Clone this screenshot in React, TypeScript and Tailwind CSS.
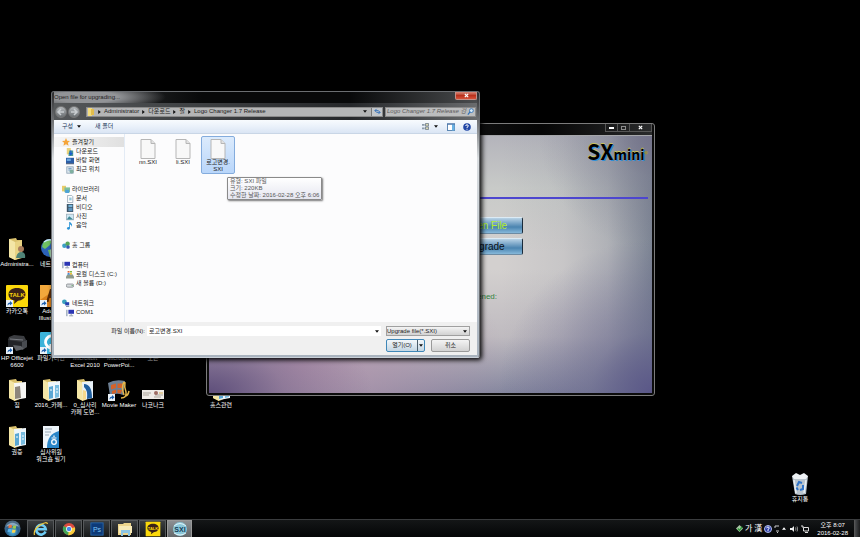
import React from "react";

const FolderIcon = ({ kind }: { kind: string }) => (
  <svg viewBox="0 0 24 24" className="h-6 w-6">
    <path d="M4 2 L11 1 L12 3 L17 3 L17 20 L10 23 L4 20 Z" fill="#d9c06c" />
    <path d="M4 2 L10 5 L10 23 L4 20 Z" fill="#f4e6a6" />
    {kind === "user" && (
      <g>
        <path d="M10 5 L17 3 L17 21 L10 23 Z" fill="#e9d383" />
        <circle cx="16" cy="12" r="3" fill="#a97d5c" />
        <path d="M11 21 Q12 15 16 15 Q21 15 20 21 Z" fill="#4f8377" />
      </g>
    )}
    {kind === "photo" && (
      <g>
        <path d="M9 5 L21 4 L21 20 L10 22 Z" fill="#f6f6f4" />
        <path d="M10 9 L15 8 L16 20 L10 21 Z" fill="#8d867c" />
      </g>
    )}
    {kind === "docs" && (
      <g>
        <path d="M9 4 L21 3 L21 20 L10 22 Z" fill="#eef6fb" />
        <path d="M10 9 L14 8 L14 20 L10 21 Z" fill="#5aa7d4" />
        <path d="M16 7 L20 7 L20 19 L16 20 Z" fill="#79bde0" />
        <path d="M11 12 h2 M17 11 h2 M17 14 h2" stroke="#fff" />
      </g>
    )}
    {kind === "blue" && (
      <g>
        <path d="M9 4 L20 3 L20 20 L10 22 Z" fill="#e8f1f8" />
        <path d="M11 6 Q19 6 19 20 L14 21 Q15 12 11 9 Z" fill="#1f5f9f" />
        <path d="M10 12 L13 13 L13 21 L10 22 Z" fill="#f5d98c" />
      </g>
    )}
  </svg>
);

const Shortcut = () => (
  <g>
    <rect x="1" y="16" width="7" height="7" fill="#e9f1f8" />
    <path d="M2.500 21.500 Q2.500 18.500 5 18.500 V17 L7.500 19.200 L5 21.500 V20 Q3.500 20 2.500 21.500Z" fill="#1c5fae" />
  </g>
);

const GlobeIcon = () => (
  <svg viewBox="0 0 24 24" className="h-6 w-6">
    <circle cx="11" cy="11" r="9" fill="#2b62b8" />
    <path d="M4 6 Q8 1 13 3 L11 8 L6 12 L3 10Z M9 13 L15 12 L16 17 L11 20Z" fill="#6fc060" />
    <path d="M5 5 Q10 1 15 4" stroke="#c6e6fb" strokeWidth="1.500" fill="none" />
    <rect x="12" y="13" width="10" height="8" fill="#3a4ec6" stroke="#dce6f6" />
  </svg>
);

const TalkIcon = ({ shortcut }: { shortcut?: boolean }) => (
  <svg viewBox="0 0 24 24" className="h-full w-full">
    <rect x="1" y="1" width="22" height="22" rx="1" fill="#fbd80a" />
    <path d="M12 4 C17 4 20.500 6.500 20.500 10.500 C20.500 14 17 16.500 13 16.700 L9 20 L9.500 16.500 C6 16 3.500 13.500 3.500 10.500 C3.500 6.500 7 4 12 4Z" fill="#3a2218" />
    <text x="12" y="13" textAnchor="middle" fontSize="6" fontWeight="700" fontFamily="Liberation Sans, sans-serif" fill="#fbd80a">TALK</text>
    {shortcut && <Shortcut />}
  </svg>
);

const IllustratorIcon = () => (
  <svg viewBox="0 0 24 24" className="h-6 w-6">
    <rect x="1" y="1" width="22" height="22" fill="#d9811c" />
    <path d="M1 1 H23 L1 16Z" fill="#f2a83c" />
    <path d="M7 18 L11 5 H13 L17 18 H14.500 L13.500 14 H10.500 L9.500 18Z" fill="#5a2c06" />
    <Shortcut />
  </svg>
);

const PrinterIcon = () => (
  <svg viewBox="0 0 24 24" className="h-6 w-6">
    <path d="M4 6 L9 4 L19 5 L21 9 L20 12 L6 12 L3 9Z" fill="#3b3d41" />
    <path d="M3 9 L17 11 L22 9 L22 16 L17 19 L3 16Z" fill="#222428" />
    <path d="M17 11 L22 9 L22 16 L17 19Z" fill="#484b50" />
    <path d="M8 14 L16 15 L19 18 L11 20Z" fill="#5d6065" />
    <path d="M5 8 L18 9" stroke="#777a80" />
    <Shortcut />
  </svg>
);

const FileShareIcon = () => (
  <svg viewBox="0 0 24 24" className="h-6 w-6">
    <rect x="1" y="1" width="22" height="22" rx="1" fill="#3bb3da" />
    <path d="M16 6 A6 6 0 1 0 17 15 M12 13 V21" stroke="#fff" strokeWidth="3" fill="none" />
    <Shortcut />
  </svg>
);

const MovieIcon = () => (
  <svg viewBox="0 0 24 24" className="h-6 w-6">
    <path d="M1 5 Q8 1 18 3 L16 17 Q9 14 3 18Z" fill="#6d7f93" />
    <path d="M4 7 L9 5.500 L9 10 L4 11.500Z M10.500 5.500 L16 5.500 L15 10 L10.500 10Z M5 13 L9 11.500 V15 L5 16Z M10.500 11.500 L15 12 L14 15.500 L10.500 15Z" fill="#d4622a" />
    <path d="M14 20 Q20 20 19 14 Q17 9 18 4 M18 18 Q21 18 22 13 M17 4 Q14 9 17 17" stroke="#e5b64a" strokeWidth="1.500" fill="none" />
    <Shortcut />
  </svg>
);

const PictureIcon = () => (
  <svg viewBox="0 0 24 24" className="h-6 w-6">
    <rect x="1" y="12" width="22" height="9" fill="#eeeae6" />
    <path d="M2 15 H10 M2 17 H8 M14 17 H22 M13 19 H20" stroke="#aaa39a" />
    <circle cx="15" cy="15" r="2" fill="#9d6b62" />
    <path d="M18 15 h4" stroke="#d0a94e" />
  </svg>
);

const HwpIcon = () => (
  <svg viewBox="0 0 24 24" className="h-6 w-6">
    <path d="M4 1 H20 V23 H4Z" fill="#eef5fa" />
    <path d="M6 4 H13 M6 7 H12 M6 10 H10" stroke="#9aa9b6" />
    <path d="M20 6 V23 H8 Q8 9 20 6Z" fill="#2a86c8" />
    <circle cx="15" cy="17" r="2.300" fill="none" stroke="#fff" strokeWidth="1.300" />
    <path d="M12.500 13 H17.500 M15 10.500 V12" stroke="#fff" strokeWidth="1.200" />
  </svg>
);

const BinIcon = () => (
  <svg viewBox="0 0 24 24" className="h-6 w-6">
    <path d="M4 4 L20 4 L18 22 Q12 24 7 22Z" fill="#b9c4cd" />
    <path d="M4 4 L8 1 L12 3 L16 1 L20 4 L18 7 L6 7Z" fill="#eef2f5" />
    <path d="M6 8 L8 21 M18 8 L16 21" stroke="#eaeff3" strokeWidth="1.500" />
    <path d="M9 14 L11 10 L14 11 M15 13 L15 17 L12 18 M10 18 L8.500 15.500" stroke="#2f74c9" strokeWidth="2" fill="none" />
  </svg>
);

const IeIcon = () => (
  <svg viewBox="0 0 16 16" className="h-4 w-4">
    <path d="M12.500 10.500 A4.800 4.800 0 1 1 12.800 8.300 H4" stroke="#6fcdf6" strokeWidth="2.600" fill="none" />
    <path d="M1.500 14 Q0 9 7 4 Q14 0 14.500 3" stroke="#f2c83c" strokeWidth="1.200" fill="none" />
  </svg>
);

const ChromeIcon = () => (
  <svg viewBox="0 0 16 16" className="h-[14px] w-[14px]">
    <circle cx="8" cy="8" r="7" fill="#dd4b3e" />
    <path d="M8 8 L1.900 4.500 A7 7 0 0 0 8 15Z" fill="#3fa757" />
    <path d="M8 8 L14.700 6 A7 7 0 0 1 7 15Z" fill="#f8cd3b" />
    <circle cx="8" cy="8" r="3.300" fill="#fff" />
    <circle cx="8" cy="8" r="2.500" fill="#4587e8" />
  </svg>
);

const PsIcon = () => (
  <svg viewBox="0 0 16 16" className="h-[14px] w-[14px]">
    <rect x="1" y="1" width="14" height="14" fill="#0d3a78" stroke="#2869b0" />
    <text x="8" y="11" textAnchor="middle" fontSize="8" fontFamily="Liberation Sans, sans-serif" fill="#7cc4f4">Ps</text>
  </svg>
);

const ExplorerIcon = () => (
  <svg viewBox="0 0 16 16" className="h-4 w-4">
    <path d="M1 3 H6 L7 2 H14 V14 H1Z" fill="#ecd48c" />
    <path d="M2 5 H15 V12 H2Z" fill="#f7eab8" />
    <path d="M4 15 V9 H13 V15 H11 V12 H6 V15Z" fill="#8cc5e4" />
  </svg>
);

const SxiIcon = () => (
  <svg viewBox="0 0 16 16" className="h-4 w-4">
    <circle cx="8" cy="8" r="7" fill="#8cc8da" />
    <path d="M2 5 Q8 0 14 5 M2 12 Q8 16 14 12" stroke="#e0f3f8" fill="none" />
    <text x="8" y="10.500" textAnchor="middle" fontSize="7" fontWeight="700" fontFamily="Liberation Sans, sans-serif" fill="#173f58">SXI</text>
  </svg>
);

const StartOrb = () => (
  <svg viewBox="0 0 18 18" className="h-[17px] w-[17px]">
    <defs>
      <radialGradient id="orb" cx="0.500" cy="0.700" r="0.600">
        <stop offset="0" stopColor="#5cc6ee" />
        <stop offset="0.600" stopColor="#27618f" />
        <stop offset="1" stopColor="#4f6d86" />
      </radialGradient>
    </defs>
    <circle cx="9" cy="9" r="8.500" fill="url(#orb)" />
    <path d="M2 7 Q9 -1 16 7 Q9 5 2 7Z" fill="#a9c4d8" opacity="0.700" />
    <path d="M5 5.500 Q7 4.500 8.500 5.500 L8 8.500 Q6 8 4.500 8.700Z" fill="#ee7340" />
    <path d="M9.500 5.700 Q11 6.500 13 5.500 L12.500 9 Q11 9.600 9 8.800Z" fill="#9bcc4a" />
    <path d="M4.300 9.700 Q6 9 8 9.700 L7.400 13 Q6 12 3.800 12.800Z" fill="#5ab4ec" />
    <path d="M8.900 10 Q11 10.800 12.400 10 L11.800 13.200 Q10 14 8.300 13.200Z" fill="#fbd34b" />
  </svg>
);

const desktopItems = [
  { label: ["Administra..."], place: "col-start-1 row-start-1", icon: <FolderIcon kind="user" /> },
  { label: ["네트워크"], place: "col-start-2 row-start-1", icon: <GlobeIcon /> },
  { label: ["카카오톡"], place: "col-start-1 row-start-2", icon: <TalkIcon shortcut /> },
  { label: ["Adobe", "Illustrat..."], place: "col-start-2 row-start-2", icon: <IllustratorIcon /> },
  { label: ["HP Officejet", "6600"], place: "col-start-1 row-start-3", icon: <PrinterIcon /> },
  { label: ["파일가디언"], place: "col-start-2 row-start-3", icon: <FileShareIcon /> },
  { label: ["Microsoft", "Excel 2010"], place: "col-start-3 row-start-3", icon: null },
  { label: ["Microsoft", "PowerPoi..."], place: "col-start-4 row-start-3", icon: null },
  { label: ["오픈"], place: "col-start-5 row-start-3", icon: null },
  { label: ["집"], place: "col-start-1 row-start-4", icon: <FolderIcon kind="photo" /> },
  { label: ["2016_카페..."], place: "col-start-2 row-start-4", icon: <FolderIcon kind="docs" /> },
  { label: ["0_심사리", "카페 도면..."], place: "col-start-3 row-start-4", icon: <FolderIcon kind="blue" /> },
  { label: ["Movie Maker"], place: "col-start-4 row-start-4", icon: <MovieIcon /> },
  { label: ["나코나크"], place: "col-start-5 row-start-4", icon: <PictureIcon /> },
  { label: ["홈스관련"], place: "col-start-7 row-start-4", icon: <FolderIcon kind="docs" /> },
  { label: ["권증"], place: "col-start-1 row-start-5", icon: <FolderIcon kind="docs" /> },
  { label: ["심사위원", "워크숍 필기"], place: "col-start-2 row-start-5", icon: <HwpIcon /> },
];

const DesktopItem = ({ label, icon }: { label: string[]; icon: React.ReactNode }) => (
  <div className="flex flex-col items-center text-[6px] leading-[7px] text-white whitespace-nowrap">
    <div className="h-6 w-6">{icon}</div>
    {label.map((line) => (
      <p key={line}>{line}</p>
    ))}
  </div>
);

const SmallIcon = ({ name }: { name: string }) => (
  <svg viewBox="0 0 10 10" className="h-2 w-2 shrink-0">
    {name === "star" && <path d="M5 0 L6.500 3.300 L10 3.700 L7.400 6 L8.200 9.700 L5 7.800 L1.800 9.700 L2.600 6 L0 3.700 L3.500 3.300Z" fill="#f5a53a" />}
    {name === "download" && (
      <g>
        <path d="M1 0 H6 V8 H1Z" fill="#e9d27c" />
        <path d="M4 3 H9 V10 H3Z" fill="#4f9a8e" />
        <path d="M6 3 V8 M4 6 L6 8.500 L8 6" stroke="#1a5fd0" strokeWidth="1.500" fill="none" />
      </g>
    )}
    {name === "desktop" && (
      <g>
        <rect x="0" y="1" width="10" height="7" fill="#2c5ea6" />
        <rect x="1" y="2" width="5" height="3" fill="#6aa6de" />
        <rect x="0" y="8" width="10" height="1" fill="#1d3354" />
      </g>
    )}
    {name === "recent" && (
      <g>
        <rect x="1" y="1" width="8" height="8" fill="#dce6ee" stroke="#8ea2b4" />
        <path d="M3 3 H7 M3 5 H6" stroke="#5485b6" />
        <circle cx="7" cy="7" r="2.500" fill="#7fb0a0" />
      </g>
    )}
    {name === "library" && (
      <g>
        <path d="M0 1 H5 V8 H0Z" fill="#e8cc6a" />
        <path d="M3 3 H10 V9 H3Z" fill="#7fbf9b" />
        <path d="M4 6 H9 V10 H4Z" fill="#4da2d6" />
      </g>
    )}
    {name === "document" && (
      <g>
        <path d="M2 0.500 H7 L8.500 2 V9.500 H2Z" fill="#fff" stroke="#8f9fb0" />
        <path d="M4 4 H7 M4 6 H7" stroke="#3f9cc0" />
      </g>
    )}
    {name === "video" && (
      <g>
        <rect x="1" y="0" width="8" height="10" fill="#3d5568" />
        <rect x="3" y="1" width="5" height="3" fill="#79b7dc" />
        <rect x="3" y="5" width="5" height="4" fill="#5b93bd" />
      </g>
    )}
    {name === "picture" && (
      <g>
        <rect x="0.500" y="1.500" width="9" height="7" fill="#cfe8f4" stroke="#9db0bb" />
        <path d="M1 8 L4 4 L9 8Z" fill="#3e8895" />
      </g>
    )}
    {name === "music" && <path d="M4 0 L5 0 Q9 3 7 6 Q7 3 5 3 V8 Q4 10 2 9.500 Q0 8 2 6.700 Q3 6 4 6.500Z" fill="#2a93d5" />}
    {name === "home" && (
      <g>
        <circle cx="3" cy="6" r="2.800" fill="#3c9fc4" />
        <circle cx="7" cy="3.500" r="2.800" fill="#57a65a" />
        <circle cx="7.500" cy="7.500" r="2.300" fill="#3558b4" />
      </g>
    )}
    {name === "computer" && (
      <g>
        <rect x="0" y="1" width="2" height="8" fill="#a8b4c4" />
        <rect x="3" y="1" width="7" height="5" fill="#2b35b4" />
        <path d="M4 8.500 H9 M6.500 6 V8" stroke="#76869a" />
      </g>
    )}
    {name === "disk" && (
      <g>
        <path d="M0 7 L2 4 H8 L10 7 V9.500 H0Z" fill="#8f9a8c" />
        <path d="M2 0 H4.500 V2 H2Z" fill="#e5673a" />
        <path d="M5 0 H7.500 V2 H5Z" fill="#7fb83e" />
        <path d="M2 2.500 H4.500 V4.500 H2Z" fill="#3f8fdc" />
        <path d="M5 2.500 H7.500 V4.500 H5Z" fill="#f0c23b" />
      </g>
    )}
    {name === "drive" && (
      <g>
        <rect x="0.500" y="5" width="9" height="4" rx="1.500" fill="#d5d9dc" stroke="#84898e" />
        <path d="M7 7 h1.500" stroke="#3f9a48" />
      </g>
    )}
    {name === "network" && (
      <g>
        <circle cx="3" cy="3.500" r="3" fill="#3aa0bd" />
        <rect x="4" y="4" width="5" height="4" fill="#2440ae" />
        <path d="M5 9.500 H9" stroke="#5f7088" />
      </g>
    )}
  </svg>
);

const places = [
  { title: "즐겨찾기", icon: "star", children: [["다운로드", "download"], ["바탕 화면", "desktop"], ["최근 위치", "recent"]] },
  { title: "라이브러리", icon: "library", children: [["문서", "document"], ["비디오", "video"], ["사진", "picture"], ["음악", "music"]] },
  { title: "홈 그룹", icon: "home", children: [] },
  { title: "컴퓨터", icon: "computer", children: [["로컬 디스크 (C:)", "disk"], ["새 볼륨 (D:)", "drive"]] },
  { title: "네트워크", icon: "network", children: [["COM1", "computer"]] },
];

const Sidebar = () => (
  <nav className="flex w-[71px] shrink-0 flex-col gap-[10px] border-r border-[#e3ebf5] pt-[3px] whitespace-nowrap">
    {places.map((group, i) => (
      <div key={group.title}>
        <a
          href="#"
          className={
            i === 0
              ? "flex h-[10px] items-center gap-[2px] bg-linear-to-r from-[#f6f6f6] to-[#e0e0e0] pl-2"
              : "flex h-[10px] items-center gap-[2px] pl-2"
          }
        >
          <SmallIcon name={group.icon} />
          {group.title}
        </a>
        {group.children.map(([label, icon]) => (
          <a href="#" key={label} className="flex h-[9px] items-center gap-[2px] pl-3">
            <SmallIcon name={icon} />
            {label}
          </a>
        ))}
      </div>
    ))}
  </nav>
);

const FileTile = ({ label, selected }: { label: string[]; selected?: boolean }) => (
  <button
    className={
      selected
        ? "flex h-[38px] w-[34px] flex-col items-center rounded-xs border border-[#84acdd] bg-linear-to-b from-[#dcebfc] to-[#b9d6fa] pt-[2px]"
        : "flex h-[38px] w-[34px] flex-col items-center border border-transparent pt-[2px]"
    }
  >
    <svg viewBox="0 0 16 20" className="h-5 w-4">
      <path d="M1 0.500 H11 L15 4.500 V19.500 H1Z" fill="#f8f8f8" stroke="#b6b6b6" />
      <path d="M11 0.500 V4.500 H15" fill="#e2e2e2" stroke="#b6b6b6" />
    </svg>
    {label.map((line) => (
      <span key={line}>{line}</span>
    ))}
  </button>
);

const Arrow = () => (
  <svg viewBox="0 0 6 4" className="h-[3px] w-1 shrink-0">
    <path d="M0 0 H6 L3 4Z" fill="#111" />
  </svg>
);

const Crumb = ({ label }: { label: string }) => (
  <a href="#" className="flex items-center gap-[3px]">
    <svg viewBox="0 0 4 6" className="h-1 w-[3px]">
      <path d="M0 0 V6 L4 3Z" fill="#111" />
    </svg>
    {label}
  </a>
);

const NavButton = ({ label, flip }: { label: string; flip?: boolean }) => (
  <button aria-label={label} className="h-3 w-3 rounded-full border border-[#777] bg-linear-to-b from-[#b4b8bb] to-[#6b7073]">
    <svg viewBox="0 0 10 10" className={flip ? "h-full w-full rotate-180" : "h-full w-full"}>
      <path d="M5 2 L2 5 L5 8 M2 5 H8" stroke="#c9cdd0" strokeWidth="1.500" fill="none" />
    </svg>
  </button>
);

const OpenDialog = () => (
  <section className="absolute top-[91px] left-[51px] flex h-[267px] w-[429px] flex-col rounded-[3px] border border-[#6b6e72] border-b-[#c9d0d8] bg-linear-to-b from-[#2a2b2d] via-[#d9dde0] via-25% to-[#a9b3be] px-[2px] pb-[2px] text-[6px] leading-[7px] text-[#222] shadow-[2px_2px_5px_#000]">
    <header className="flex h-[11px] items-start justify-between bg-[radial-gradient(ellipse_80px_14px_at_32px_5px,#929497_40%,transparent),linear-gradient(to_right,#3a3c3e,#08090a_35%,#08090a_70%,#4a4c4e)]">
      <h1 className="pt-[2px] whitespace-nowrap">Open file for upgrading...</h1>
      <button aria-label="닫기" className="flex h-2 w-[22px] items-center justify-center rounded-b-xs border border-t-0 border-[#c58f87] bg-linear-to-b from-[#d98a7c] via-[#b9311c] to-[#d6523a]">
        <svg viewBox="0 0 6 6" className="h-[5px] w-[5px]">
          <path d="M1 1 L5 5 M5 1 L1 5" stroke="#fff" strokeWidth="1.500" />
        </svg>
      </button>
    </header>
    <div className="flex h-[17px] items-center gap-px bg-linear-to-r from-[#55585a] via-[#25272a] via-70% to-[#6a6c6e] pr-px pl-px">
      <NavButton label="뒤로" />
      <NavButton label="앞으로" flip />
      <div className="ml-[5px] flex h-[10px] min-w-0 flex-1 items-center gap-[3px] border border-[#8a8a8a] bg-[#b4b5b6] whitespace-nowrap">
        <svg viewBox="0 0 8 8" className="h-2 w-2">
          <path d="M1 0 H5 V8 H1Z" fill="#f3dc7e" />
          <path d="M4 1 H7 V7 H4Z" fill="#e2bd4c" />
        </svg>
        <Crumb label="Administrator" />
        <Crumb label="다운로드" />
        <Crumb label="잘" />
        <Crumb label="Logo Changer 1.7 Release" />
        <div className="ml-auto flex h-full items-center gap-1">
          <Arrow />
          <button aria-label="새로 고침" className="flex h-full w-[11px] items-center justify-center border-l border-[#777] bg-[#c2c6ca]">
            <svg viewBox="0 0 8 8" className="h-[7px] w-[7px]">
              <path d="M3 1 L1 3 L3 5 M1 3 H5 M5 3 L7 5 L5 7 M7 5 H3" stroke="#2f6db8" fill="none" />
            </svg>
          </button>
        </div>
      </div>
      <div className="ml-px flex h-[10px] w-[91px] items-center border border-[#8a8a8a] bg-[#bcbdbe] px-px">
        <input aria-label="검색" placeholder="Logo Changer 1.7 Release 검색" className="min-w-0 flex-1 italic outline-none placeholder:text-[#5c5c5c]" />
        <svg viewBox="0 0 8 8" className="h-[7px] w-[7px]">
          <circle cx="5" cy="3" r="2.200" fill="#d7ebf8" stroke="#3272b8" />
          <path d="M3.500 4.500 L1 7.500" stroke="#3272b8" strokeWidth="1.400" />
        </svg>
      </div>
    </div>
    <div className="flex h-[14px] shrink-0 items-center border-b border-[#c9d6e6] bg-linear-to-b from-[#f8fbfe] via-[#eaf1fa] to-[#dae5f4] pr-[6px] pl-2 text-[#1e395b]">
      <button className="flex items-center gap-1">구성 <Arrow /></button>
      <button className="ml-[14px]">새 폴더</button>
      <button aria-label="보기 변경" className="ml-auto flex items-center gap-[5px]">
        <svg viewBox="0 0 8 8" className="h-[7px] w-[7px]">
          <path d="M0 1 H3 V3 H0Z M0 5 H3 V7 H0Z" fill="#8b9bab" />
          <path d="M4 0.500 H7.500 V3.500 H4Z M4 4.500 H7.500 V7.500 H4Z" fill="#d8d7b5" stroke="#77848f" />
        </svg>
        <Arrow />
      </button>
      <button aria-label="미리 보기 창" className="ml-[9px]">
        <svg viewBox="0 0 8 8" className="h-2 w-2">
          <rect x="0.500" y="1" width="7" height="6.500" fill="#fff" stroke="#5d87b3" />
          <rect x="5" y="1" width="2.500" height="6.500" fill="#6ab2e4" />
          <rect x="0" y="0.500" width="8" height="1" fill="#466fa4" />
        </svg>
      </button>
      <button aria-label="도움말" className="ml-2">
        <svg viewBox="0 0 8 8" className="h-2 w-2">
          <circle cx="4" cy="4" r="3.800" fill="#2146a5" />
          <path d="M2.700 3 Q2.700 1.800 4 1.800 Q5.300 1.800 5.300 3 Q5.300 3.800 4 4.300 V5 M4 5.800 V6.700" stroke="#fff" fill="none" />
        </svg>
      </button>
    </div>
    <div className="flex min-h-0 flex-1 bg-[#fcfcfd]">
      <Sidebar />
      <div className="relative flex flex-1 items-start gap-px pt-[2px] pl-[6px]">
        <FileTile label={["nn.SXI"]} />
        <FileTile label={["li.SXI"]} />
        <FileTile label={["로고변경.", "SXI"]} selected />
        <div role="tooltip" className="absolute top-[43px] left-[102px] rounded-[1px] border border-[#8a8a8a] bg-linear-to-b from-white to-[#e5e6f0] px-[2px] text-[#575757] whitespace-nowrap shadow-[1px_1px_2px_#777]">
          <p>유형: SXI 파일</p>
          <p>크기: 220KB</p>
          <p>수정한 날짜: 2016-02-28 오후 6:06</p>
        </div>
      </div>
    </div>
    <footer className="flex h-[33px] shrink-0 flex-col gap-[3px] bg-[#f0f0f0] pt-1 pr-[7px]">
      <div className="flex h-[10px] items-center">
        <label htmlFor="file-name" className="w-[91px] text-right">파일 이름(N):</label>
        <div className="ml-[2px] flex h-full min-w-0 flex-1 items-center bg-white px-[2px]">
          <input id="file-name" defaultValue="로고변경.SXI" className="min-w-0 flex-1 outline-none" />
          <Arrow />
        </div>
        <div className="ml-[5px] flex h-full w-[84px] items-center border border-[#a0a0a0] bg-linear-to-b from-[#f4f4f4] to-[#d2d2d2] pr-[2px]">
          <select aria-label="파일 형식" className="min-w-0 flex-1 appearance-none outline-none">
            <option>Upgrade file(*.SXI)</option>
          </select>
          <Arrow />
        </div>
      </div>
      <div className="flex h-[13px] justify-end gap-[6px]">
        <div className="flex w-[39px] rounded-xs border border-[#3f87b8] bg-linear-to-b from-[#f3f7fa] to-[#c4d6e3]">
          <button className="flex-1">열기(O)</button>
          <button aria-label="열기 옵션" className="flex w-[7px] items-center justify-center border-l border-[#4a5c6a]"><Arrow /></button>
        </div>
        <button className="w-[39px] rounded-xs border border-[#9a9a9a] bg-linear-to-b from-[#f4f4f4] to-[#d2d2d2]">취소</button>
      </div>
    </footer>
  </section>
);

const glossy =
  "h-[17px] w-[75px] rounded-xs border border-t-[#dcebf5] border-r-[#1b2b3a] border-b-[#6d8ba3] border-l-[#7fa8c4] bg-linear-to-b from-[#b9d3e6] via-[#4a84b0] via-60% to-[#86b8da] text-[10px] leading-3";

const UpgradeWindow = () => (
  <section className="absolute top-[123px] left-[206px] flex h-[273px] w-[449px] flex-col rounded-[3px] border border-[#7c7c7c] bg-[#0c0c0c] px-[2px] pb-[2px] font-['Liberation_Sans',sans-serif]">
    <header className="flex h-[11px] items-start justify-end bg-linear-to-r from-[#3a3b3d] via-[#060606] via-75% to-[#2a2b2c]">
      <div className="flex h-2 divide-x divide-[#555] border border-t-0 border-[#555]">
        <button aria-label="최소화" className="flex w-3 items-end justify-center pb-[2px]"><span className="h-[2px] w-[5px] bg-white" /></button>
        <button aria-label="최대화" className="flex w-3 items-center justify-center"><span className="h-1 w-[5px] border border-[#8c8c8c]" /></button>
        <button aria-label="닫기" className="flex w-[21px] items-center justify-center">
          <svg viewBox="0 0 6 6" className="h-[5px] w-[5px]">
            <path d="M1 1 L5 5 M5 1 L1 5" stroke="#fff" strokeWidth="1.500" />
          </svg>
        </button>
      </div>
    </header>
    <div className="flex flex-1 flex-col border-t border-[#a5a6a9] bg-[radial-gradient(circle_at_100%_100%,#5a5788,#5a578866_12%,transparent_30%),radial-gradient(circle_at_100%_0%,#74738a,#74738a55_8%,transparent_22%),radial-gradient(ellipse_at_0%_100%,#5f4f7b,#5f4f7b66_12%,transparent_26%),radial-gradient(ellipse_at_20%_90%,#b598af,#b598af88_20%,transparent_42%),linear-gradient(to_left,#7d8594,#7d859466_10%,#7d859422_20%,transparent_34%),linear-gradient(to_top,#85879f,#b5b0b8aa_22%,transparent_48%),linear-gradient(to_bottom,#b4b4bb,#c8cac8_20%,#d3d0cf_45%)] px-1 pt-[3px]">
      <div className="flex h-[25px] items-baseline justify-end font-['Noto_Sans_CJK_KR',sans-serif] font-bold text-black [text-shadow:1px_1px_0_#2f8fd8,0_-1px_0_#c9c25a]">
        <span className="text-[21px] leading-6">SX</span>
        <span className="text-[14px] leading-5">mini</span>
        <sup className="text-[7px] leading-none text-[#a5981f] [text-shadow:none]">®</sup>
      </div>
      <hr className="mt-[33px] border-t-2 border-[#4d46cf]" />
      <div className="mt-[18px] flex flex-col items-end gap-1 pr-[125px]">
        <button className={`${glossy} text-[#b4ee2c]`}>Open File</button>
        <button className={`${glossy} text-[#0a1018]`}>Upgrade</button>
        <p className="mt-[33px] pr-[26px] text-[8px] leading-[10px] text-[#2f8240]">File opened:</p>
      </div>
    </div>
  </section>
);

const apps = [
  { name: "Internet Explorer", icon: <IeIcon /> },
  { name: "Chrome", icon: <ChromeIcon /> },
  { name: "Photoshop", icon: <PsIcon /> },
  { name: "Windows 탐색기", icon: <ExplorerIcon /> },
  { name: "카카오톡", icon: <div className="h-4 w-4"><TalkIcon /></div> },
  { name: "SXI", icon: <SxiIcon />, active: true },
];

const Taskbar = () => (
  <footer className="flex h-[18px] items-center border-t border-[#3a3c3e] bg-linear-to-b from-[#141617] to-[#050607] text-white">
    <button aria-label="시작" className="ml-1"><StartOrb /></button>
    <div className="ml-[6px] flex h-full gap-px">
      {apps.map((app) => (
        <button
          key={app.name}
          aria-label={app.name}
          className={
            app.active
              ? "flex w-[25px] items-center justify-center border border-b-0 border-[#999] bg-linear-to-b from-[#8c8f92] to-[#65686b]"
              : "flex w-[27px] items-center justify-center border border-b-0 border-[#56595b] bg-linear-to-b from-[#3b3e40] to-[#17191a]"
          }
        >
          {app.icon}
        </button>
      ))}
    </div>
    <div className="ml-auto flex items-center gap-[2px] text-[8px] leading-none">
      <svg viewBox="0 0 8 8" className="h-[7px] w-[7px]">
        <path d="M4 0 L8 4 L4 8 L0 4Z" fill="#a8c7a6" />
        <path d="M2 4 L4 6 L7 2" stroke="#2f9a36" strokeWidth="1.500" fill="none" />
      </svg>
      <span>가</span>
      <span>漢</span>
      <svg viewBox="0 0 8 8" className="h-2 w-2">
        <circle cx="4" cy="4" r="3.500" fill="#2336a4" stroke="#b9c4ee" />
        <path d="M2.700 3.300 Q2.700 2 4 2 Q5.300 2 5.300 3.200 Q5.300 3.900 4 4.300 V6.300" stroke="#fff" fill="none" />
      </svg>
      <svg viewBox="0 0 6 8" className="h-2 w-[6px]">
        <path d="M1 3 V1 H3 M4 0 V2 M2 6 H5 M3 7.500 H4" stroke="#ccc" fill="none" />
      </svg>
      <svg viewBox="0 0 6 4" className="h-[3px] w-1">
        <path d="M0 4 H6 L3 0Z" fill="#fff" />
      </svg>
      <svg viewBox="0 0 8 8" className="ml-[2px] h-2 w-2">
        <path d="M0 3 H2 L4 1 V7 L2 5 H0Z" fill="#eee" />
        <path d="M5.500 2.500 Q6.500 4 5.500 5.500 M7 1.500 Q8.500 4 7 6.500" stroke="#ccc" strokeWidth="0.700" fill="none" />
      </svg>
      <svg viewBox="0 0 8 8" className="ml-px h-2 w-2">
        <path d="M2.500 2.500 H7.500 V6 H2.500Z M0 1 H2 V3 M4 7.500 H7" stroke="#ddd" fill="none" />
      </svg>
    </div>
    <div className="ml-2 text-center text-[6px] leading-2 whitespace-nowrap">
      <p>오후 8:07</p>
      <p>2016-02-28</p>
    </div>
    <button aria-label="바탕 화면 보기" className="ml-[6px] h-full w-[6px] border-l border-[#555] bg-linear-to-r from-[#4a4c4e] to-[#1b1c1d]" />
  </footer>
);

const App = () => {
  return (
    <div className="flex min-h-screen flex-col overflow-hidden bg-black font-['Liberation_Sans','Noto_Sans_CJK_KR',sans-serif]">
      <main className="relative flex-1">
        <div className="grid auto-cols-[34px] grid-rows-[repeat(5,47px)] pt-[237px]">
          {desktopItems.map((item) => (
            <div key={item.place} className={item.place}>
              <DesktopItem label={item.label} icon={item.icon} />
            </div>
          ))}
        </div>
        <div className="absolute right-12 bottom-4">
          <DesktopItem label={["휴지통"]} icon={<BinIcon />} />
        </div>
        <UpgradeWindow />
        <OpenDialog />
      </main>
      <Taskbar />
    </div>
  );
};

export default App;
